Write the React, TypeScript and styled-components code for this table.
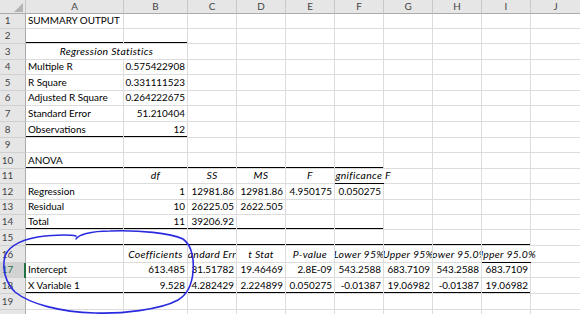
import React from 'react';
import styled, { createGlobalStyle, css } from 'styled-components';

const GlobalStyle = createGlobalStyle`
  html, body { margin: 0; padding: 0; background: #ffffff; }
  body { width: 580px; height: 314px; overflow: hidden; }
`;

type Rule = 'thin' | 'thick';
type Align = 'l' | 'r' | 'c';
type CellDef = { t?: string; a?: Align; i?: boolean; u?: Rule; spill?: boolean; span?: number };

const COLS = ['A', 'B', 'C', 'D', 'E', 'F', 'G', 'H', 'I', 'J'];
const COL_W = [98, 64, 49, 49, 49, 49, 49, 49, 49, 50];
const ROW_H = [15, 15, 16, 15, 16, 15, 16, 16, 15, 16, 15, 16, 15, 15, 16, 17, 15, 16, 16, 16];
const ACTIVE_ROW = 17;

const L = (t: string, u?: Rule): CellDef => ({ t, a: 'l', u });
const R = (t: string, u?: Rule): CellDef => ({ t, a: 'r', u });
const H = (t: string, u: Rule = 'thin', spill = false): CellDef => ({ t, a: 'c', i: true, u, spill });
const E = (u?: Rule): CellDef => ({ u });

const DATA: Record<number, CellDef[]> = {
  1: [L('SUMMARY OUTPUT')],
  2: [E('thick'), E('thick')],
  3: [{ t: 'Regression Statistics', a: 'c', i: true, u: 'thin', span: 2 }],
  4: [L('Multiple R'), R('0.575422908')],
  5: [L('R Square'), R('0.331111523')],
  6: [L('Adjusted R Square'), R('0.264222675')],
  7: [L('Standard Error'), R('51.210404')],
  8: [L('Observations', 'thick'), R('12', 'thick')],
  10: [L('ANOVA', 'thick'), E('thick'), E('thick'), E('thick'), E('thick'), E('thick')],
  11: [E('thin'), H('df'), H('SS'), H('MS'), H('F'), H('Significance F', 'thin', true)],
  12: [L('Regression'), R('1'), R('12981.86'), R('12981.86'), R('4.950175'), R('0.050275')],
  13: [L('Residual'), R('10'), R('26225.05'), R('2622.505')],
  14: [L('Total', 'thick'), R('11', 'thick'), R('39206.92', 'thick'), E('thick'), E('thick'), E('thick')],
  15: [E('thick'), E('thick'), E('thick'), E('thick'), E('thick'), E('thick'), E('thick'), E('thick'), E('thick')],
  16: [
    E('thin'), H('Coefficients'), H('Standard Error'), H('t Stat'), H('P-value'),
    H('Lower 95%'), H('Upper 95%'), H('Lower 95.0%'), H('Upper 95.0%', 'thin', true),
  ],
  17: [
    L('Intercept'), R('613.485'), R('31.51782'), R('19.46469'), R('2.8E-09'),
    R('543.2588'), R('683.7109'), R('543.2588'), R('683.7109'),
  ],
  18: [
    L('X Variable 1', 'thick'), R('9.528', 'thick'), R('4.282429', 'thick'), R('2.224899', 'thick'),
    R('0.050275', 'thick'), R('-0.01387', 'thick'), R('19.06982', 'thick'), R('-0.01387', 'thick'),
    R('19.06982', 'thick'),
  ],
};

const FONT = `Lato, "Open Sans", "Liberation Sans", sans-serif`;

const Sheet = styled.div`
  position: relative;
  display: grid;
  grid-template-columns: 26px ${COL_W.map((w) => `${w}px`).join(' ')};
  grid-template-rows: 14px ${ROW_H.map((h) => `${h}px`).join(' ')};
  width: 580px;
  height: 314px;
  overflow: hidden;
  font-family: ${FONT};
  font-size: 9.9px;
  color: #000;
  background: #fff;
`;

const Corner = styled.div`
  position: relative;
  background: #e6e6e6;
  border-right: 1px solid #c8c8c8;
  border-bottom: 1px solid #ababab;
  box-sizing: border-box;
`;

const SelectAll = styled.svg`
  position: absolute;
  right: 2px;
  bottom: 1px;
`;

const ColHead = styled.div`
  display: flex;
  align-items: center;
  justify-content: center;
  box-sizing: border-box;
  background: #e6e6e6;
  border-right: 1px solid #c8c8c8;
  border-bottom: 1px solid #ababab;
  color: #444;
  font-size: 9.9px;
  line-height: 1;
  padding-top: 1px;
`;

const RowHead = styled.div<{ $active?: boolean }>`
  display: flex;
  align-items: flex-end;
  justify-content: center;
  box-sizing: border-box;
  padding: 0 10px 2px 0;
  background: ${(p) => (p.$active ? '#d2d2d2' : '#e6e6e6')};
  border-right: 1px solid #ababab;
  border-bottom: 1px solid #d0d0d0;
  color: ${(p) => (p.$active ? '#217346' : '#444')};
  font-size: 9.9px;
  line-height: 11px;
  position: relative;
  ${(p) =>
    p.$active &&
    css`
      &::after {
        content: '';
        position: absolute;
        top: 0;
        bottom: -1px;
        right: -1px;
        width: 2px;
        background: #217346;
      }
    `}
`;

const Cell = styled.div<{ $a?: Align; $i?: boolean; $u?: Rule; $spill?: boolean; $span?: number }>`
  position: relative;
  display: flex;
  align-items: flex-end;
  justify-content: ${(p) => (p.$a === 'r' ? 'flex-end' : p.$a === 'c' ? 'center' : 'flex-start')};
  box-sizing: border-box;
  min-width: 0;
  padding: 0 2px 2px 2px;
  border-right: 1px solid ${(p) => (p.$spill ? 'transparent' : '#dcdcdc')};
  border-bottom: 1px solid #dcdcdc;
  white-space: nowrap;
  line-height: 11px;
  overflow: ${(p) => (p.$spill ? 'visible' : 'hidden')};
  ${(p) =>
    p.$i &&
    css`
      font-style: italic;
      font-size: 10.4px;
      letter-spacing: 0.3px;
    `}
  ${(p) => p.$spill && css`clip-path: inset(-2px -80px -2px 0);`}
  ${(p) => p.$a === 'c' && css`padding-left: 0; padding-right: 0;`}
  ${(p) => p.$span && css`grid-column: span ${p.$span};`}
  ${(p) =>
    p.$u &&
    css`
      &::after {
        content: '';
        position: absolute;
        left: 0;
        right: -1px;
        bottom: -1px;
        height: ${p.$u === 'thick' ? 2 : 1}px;
        background: #000;
        z-index: 1;
      }
    `}
`;

const Text = styled.span`
  flex: none;
`;

const Annotation = styled.svg`
  position: absolute;
  left: 0;
  top: 0;
  pointer-events: none;
  z-index: 5;
`;

function renderRow(r: number) {
  const defs = DATA[r] || [];
  const cells: React.ReactNode[] = [];
  let col = 0;
  let k = 0;
  while (col < COLS.length) {
    const d = defs[k] || {};
    k += 1;
    cells.push(
      <Cell
        key={`${r}-${col}`}
        $a={d.a}
        $i={d.i}
        $u={d.u}
        $spill={d.spill}
        $span={d.span}
      >
        {d.t ? <Text>{d.t}</Text> : null}
      </Cell>
    );
    col += d.span || 1;
  }
  return (
    <React.Fragment key={r}>
      <RowHead $active={r === ACTIVE_ROW}>{r}</RowHead>
      {cells}
    </React.Fragment>
  );
}

export default function App() {
  const rows = ROW_H.map((_, i) => i + 1);
  return (
    <>
      <GlobalStyle />
      <Sheet>
        <Corner>
          <SelectAll width="9" height="9" viewBox="0 0 9 9">
            <polygon points="9,0 9,9 0,9" fill="#b4b4b4" />
          </SelectAll>
        </Corner>
        {COLS.map((c) => (
          <ColHead key={c}>{c}</ColHead>
        ))}
        {rows.map((r) => renderRow(r))}
        <Annotation width="580" height="314" viewBox="0 0 580 314">
          <path
            d="M 76 239 C 78 235, 90 231, 110 231 C 140 230, 170 233, 183 239 C 193 246, 194 262, 193 272 C 192 284, 188 294, 178 300 C 160 310, 120 314, 95 313 C 60 312, 30 304, 15 292 C 5 282, 2 268, 5 256 C 9 245, 25 238, 45 236 C 58 235, 68 234, 76 236"
            fill="none"
            stroke="#2a2ae0"
            strokeWidth="1.6"
            strokeLinecap="round"
          />
        </Annotation>
      </Sheet>
    </>
  );
}
